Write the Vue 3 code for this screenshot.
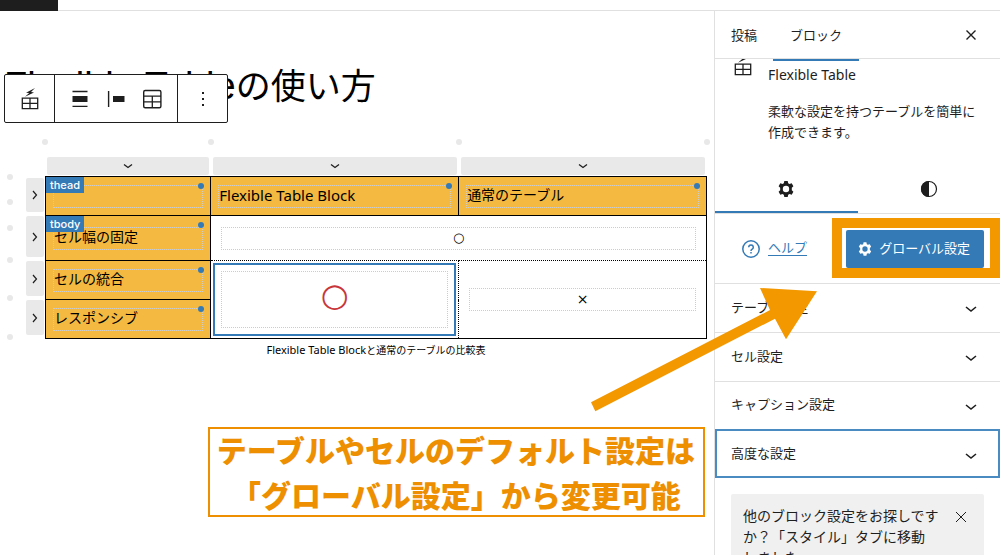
<script setup>
const panels = ['テーブル設定', 'セル設定', 'キャプション設定', '高度な設定']
const columns = [1, 2, 3]
const rows = [1, 2, 3, 4]
</script>

<template>
  <div class="app">
    <header class="topbar"><span class="logo"></span></header>
    <div class="workspace">
      <main class="editor">
        <h1 class="title"><span class="latin">Flexible Table</span>の使い方</h1>

        <div class="toolbar" role="toolbar" aria-label="ブロックツール">
          <div class="group first">
            <button type="button" aria-label="Flexible Table">
              <svg width="24" height="24" viewBox="0 0 24 24">
                <path d="M17 1 8 5.7l3.2.4L7 9.8l9-4.3-3-.5z" fill="#1e1e1e" />
                <path d="M4.3 11.2h15.4v10.4H4.3zM12 11.2v10.4M4.3 16.4h15.4" fill="none" stroke="#1e1e1e" stroke-width="1.3" />
              </svg>
            </button>
          </div>
          <div class="group second">
            <button type="button" aria-label="配置">
              <svg width="24" height="24" viewBox="0 0 24 24">
                <path d="M4.5 4.5h15M4.5 19.3h15" stroke="#1e1e1e" stroke-width="1.3" />
                <path d="M4.5 9h15v6h-15z" fill="#1e1e1e" />
              </svg>
            </button>
            <button type="button" aria-label="セルの配置">
              <svg width="24" height="24" viewBox="0 0 24 24">
                <path d="M4.6 4v16" stroke="#1e1e1e" stroke-width="1.4" />
                <path d="M9 9h11.5v6H9z" fill="#1e1e1e" />
              </svg>
            </button>
            <button type="button" aria-label="表を編集">
              <svg width="24" height="24" viewBox="0 0 24 24">
                <rect x="3.7" y="3.5" width="17.2" height="17.2" rx="1.5" fill="none" stroke="#1e1e1e" stroke-width="1.4" />
                <path d="M4 9.2h17M4 14.8h17M12.3 9.2v11.5" stroke="#1e1e1e" stroke-width="1.3" />
              </svg>
            </button>
          </div>
          <div class="group third">
            <button type="button" aria-label="オプション">
              <svg width="24" height="24" viewBox="0 0 24 24">
                <path d="M11 5h2v2h-2zM11 11h2v2h-2zM11 17h2v2h-2z" fill="#1e1e1e" />
              </svg>
            </button>
          </div>
        </div>

        <div class="block">
          <div class="column-dots"><i v-for="n in 4" :key="n" class="dot"></i></div>
          <div class="column-buttons">
            <button v-for="c in columns" :key="c" type="button" :aria-label="'列 ' + c + ' を選択'">
              <svg width="10" height="6" viewBox="0 0 10 6"><path d="m1 1.5 4 3 4-3" fill="none" stroke="#1e1e1e" stroke-width="1.3" /></svg>
            </button>
          </div>
          <div class="row-dots"><i v-for="n in 6" :key="n" class="dot"></i></div>
          <div class="row-buttons">
            <button v-for="r in rows" :key="r" type="button" :aria-label="'行 ' + r + ' を選択'">
              <svg width="6" height="10" viewBox="0 0 6 10"><path d="m1 1 3.5 4L1 9" fill="none" stroke="#1e1e1e" stroke-width="1.2" /></svg>
            </button>
          </div>
          <table>
            <colgroup><col class="narrow" /><col /><col /></colgroup>
            <thead>
              <tr>
                <th><b class="tag">thead</b><i class="mark"></i><span class="text"></span></th>
                <th><i class="mark"></i><span class="text"><span class="latin">Flexible Table Block</span></span></th>
                <th><i class="mark"></i><span class="text">通常のテーブル</span></th>
              </tr>
            </thead>
            <tbody>
              <tr class="tall">
                <th><b class="tag">tbody</b><i class="mark"></i><span class="text">セル幅の固定</span></th>
                <td colspan="2"><span class="text small">○</span></td>
              </tr>
              <tr>
                <th><i class="mark"></i><span class="text">セルの統合</span></th>
                <td rowspan="2" class="selected"><span class="text large">○</span></td>
                <td rowspan="2"><span class="text cross">×</span></td>
              </tr>
              <tr>
                <th><i class="mark"></i><span class="text">レスポンシブ</span></th>
              </tr>
            </tbody>
          </table>
          <p class="caption"><span class="latin">Flexible Table Block</span>と通常のテーブルの比較表</p>
        </div>

        <div class="callout">
          <p>テーブルやセルのデフォルト設定は<br />「グローバル設定」から変更可能</p>
        </div>
      </main>

      <aside class="sidebar">
        <div class="tabs">
          <button type="button">投稿</button>
          <button type="button" class="active">ブロック</button>
          <button type="button" class="close" aria-label="設定を閉じる">
            <svg width="12" height="12" viewBox="0 0 12 12"><path d="m1.5 1.5 9 9M10.500 1.500l-9 9" stroke="#1e1e1e" stroke-width="1.4" /></svg>
          </button>
        </div>
        <div class="inspector">
          <section class="card">
            <svg width="24" height="24" viewBox="0 0 24 24">
              <path d="M17 1 8 5.7l3.2.4L7 9.8l9-4.3-3-.5z" fill="#1e1e1e" />
              <path d="M4.3 11.2h15.4v10.4H4.3zM12 11.2v10.4M4.3 16.4h15.4" fill="none" stroke="#1e1e1e" stroke-width="1.3" />
            </svg>
            <div>
              <h2>Flexible Table</h2>
              <p>柔軟な設定を持つテーブルを簡単に作成できます。</p>
            </div>
          </section>
          <div class="modes">
            <button type="button" class="current" aria-label="設定">
              <svg width="24" height="24" viewBox="0 0 24 24"><path fill="#1e1e1e" fill-rule="evenodd" d="M10.3 4h3.4l.5 2.2 1.3.8 2.2-.7 1.7 3-1.6 1.5v2.4l1.6 1.5-1.7 3-2.2-.7-1.3.8-.5 2.2h-3.4l-.5-2.2-1.3-.8-2.2.7-1.7-3 1.600-1.500v-2.400L4.600 9.300l1.700-3 2.200.7 1.300-.8zM12 8.800a3.200 3.200 0 1 0 0 6.400 3.200 3.200 0 0 0 0-6.400z" /></svg>
            </button>
            <button type="button" aria-label="スタイル">
              <svg width="24" height="24" viewBox="0 0 24 24">
                <circle cx="12" cy="12" r="7.5" fill="none" stroke="#1e1e1e" stroke-width="1.2" />
                <path d="M12 4a8 8 0 0 0 0 16z" fill="#1e1e1e" />
              </svg>
            </button>
          </div>
          <div class="actions">
            <a href="#help">
              <svg width="20" height="20" viewBox="0 0 20 20" fill="none" stroke="#337ab7">
                <circle cx="10" cy="10" r="8.2" stroke-width="1.5" />
                <path d="M7.700 8.200a2.300 2.300 0 1 1 3.500 2c-.8.500-1.200.8-1.200 1.700M10 13v1.500" stroke-width="1.5" />
              </svg>
              <span>ヘルプ</span>
            </a>
            <div class="highlight">
              <button type="button">
                <svg width="20" height="20" viewBox="0 0 24 24"><path fill="#fff" fill-rule="evenodd" d="M10.3 4h3.4l.5 2.2 1.3.8 2.2-.7 1.7 3-1.6 1.5v2.4l1.6 1.5-1.7 3-2.2-.7-1.3.8-.5 2.2h-3.4l-.5-2.2-1.3-.8-2.2.7-1.7-3 1.600-1.500v-2.400L4.600 9.300l1.700-3 2.200.7 1.300-.8zM12 8.800a3.200 3.200 0 1 0 0 6.400 3.200 3.200 0 0 0 0-6.400z" /></svg>
                <span>グローバル設定</span>
              </button>
            </div>
          </div>
          <div class="panels">
            <button v-for="(p, i) in panels" :key="p" type="button" class="panel" :class="{ focused: i === 3 }">
              <span>{{ p }}</span>
              <svg width="12" height="8" viewBox="0 0 12 8"><path d="m1 2 5 4 5-4" fill="none" stroke="#1e1e1e" stroke-width="1.6" /></svg>
            </button>
          </div>
          <div class="notice">
            <p>他のブロック設定をお探しですか？「スタイル」タブに移動<br />しました。</p>
            <button type="button" aria-label="通知を閉じる">
              <svg width="12" height="12" viewBox="0 0 12 12"><path d="m1 1 10 10M11 1 1 11" stroke="#1e1e1e" stroke-width="1" /></svg>
            </button>
          </div>
        </div>
      </aside>
    </div>

    <svg class="arrow" width="226" height="124" viewBox="0 0 226 124" aria-hidden="true">
      <path d="M169 0 226 3.3 195 51.3 184 30.7 4.3 123.3 0 114.3 179 22z" fill="#f49800" />
    </svg>
  </div>
</template>

<style>
body {
  overflow: hidden;
}
</style>

<style scoped>
.app {
  position: relative;
  display: flex;
  flex-direction: column;
  height: 100vh;
  overflow: hidden;
  background: #fff;
  color: #1e1e1e;
  font-family: "Noto Sans", "Noto Sans CJK JP", sans-serif;
  font-size: 13px;
}
.app * {
  box-sizing: border-box;
}
button {
  display: flex;
  align-items: center;
  justify-content: center;
  margin: 0;
  padding: 0;
  border: 0;
  background: none;
  color: inherit;
  font: inherit;
}
svg {
  display: block;
  flex: none;
}
h1, h2, p {
  margin: 0;
  font-weight: 400;
}
.topbar {
  flex: none;
  height: 11px;
  border-bottom: 1px solid #e0e0e0;
}
.logo {
  display: block;
  width: 58px;
  height: 11px;
  background: #1e1e1e;
}
.workspace {
  display: flex;
  flex: 1;
  min-height: 0;
}
.editor {
  position: relative;
  flex: 1;
  min-width: 0;
  padding-top: 53px;
}
.title {
  height: 46px;
  padding-left: 4px;
  color: #000;
  font-size: 35px;
  line-height: 44px;
  white-space: nowrap;
}
.title .latin {
  font-family: "Liberation Sans", Arial, sans-serif;
  font-size: 38px;
}
.toolbar {
  position: absolute;
  top: 63px;
  left: 4px;
  display: flex;
  height: 49px;
  border: 1px solid #1e1e1e;
  border-radius: 2px;
  background: #fff;
}
.group {
  display: flex;
  align-items: center;
  justify-content: center;
}
.first {
  width: 49px;
}
.second {
  width: 124px;
  gap: 12px;
  border: solid #1e1e1e;
  border-width: 0 1px;
}
.third {
  width: 49px;
}
.block {
  display: grid;
  grid-template-columns: 19px 19px minmax(0, 1fr);
  margin-top: 29px;
  padding: 0 7px;
}
.dot {
  display: block;
  width: 6px;
  height: 6px;
  border-radius: 50%;
  background: #e8e8e8;
}
.column-dots {
  grid-column: 3;
  display: grid;
  grid-template-columns: 2fr 3fr 3fr 6px;
  margin: 0 -3px 12px;
}
.column-buttons {
  grid-column: 3;
  display: grid;
  grid-template-columns: 2fr 3fr 3fr;
  height: 19px;
  padding-bottom: 1px;
}
.column-buttons button {
  margin: 0 2px;
  border-radius: 2px;
  background: #e9e9e9;
}
.row-dots {
  grid-column: 1;
  grid-row: 3;
  display: grid;
  grid-template-rows: 25px 26px 32px 38px 39px 6px;
  margin: -2px 0;
}
.row-buttons {
  grid-column: 2;
  grid-row: 3;
  display: grid;
  grid-template-rows: 38px 45px 39px 39px;
}
.row-buttons button {
  width: 18px;
  margin: 2px 0;
  border-radius: 2px;
  background: #e9e9e9;
}
table {
  grid-column: 3;
  grid-row: 3;
  width: 100%;
  border: 1px solid #000;
  border-collapse: collapse;
  table-layout: fixed;
  color: #000;
  font-size: 14px;
}
.narrow {
  width: 25%;
}
tr {
  height: 39px;
}
.tall {
  height: 45px;
}
th, td {
  position: relative;
  border: 1px solid #000;
  font-weight: 400;
  text-align: left;
}
th {
  padding: 0 7px;
  background: #f4b940;
}
td {
  padding: 0 10px;
  border-style: dotted;
  text-align: center;
}
.text {
  display: block;
  height: 23px;
  border: 1px dotted #ccc;
  line-height: 18px;
  white-space: nowrap;
}
.text .latin {
  font-size: 15px;
}
.small, .large, .cross {
  font-family: "DejaVu Sans", sans-serif;
  line-height: 20px;
}
.small {
  font-size: 13px;
}
.large {
  height: 57px;
  color: #c9363a;
  font-size: 32px;
  line-height: 47px;
}
.selected::after {
  position: absolute;
  inset: 2px;
  border: 2px solid #337ab7;
  content: "";
}
.mark {
  position: absolute;
  top: 6px;
  right: 6px;
  width: 6px;
  height: 6px;
  border-radius: 50%;
  background: #337ab7;
}
.tag {
  position: absolute;
  top: 0;
  left: 0;
  z-index: 1;
  padding: 0 4px;
  background: #337ab7;
  color: #fff;
  font-family: Inter, sans-serif;
  font-size: 11px;
  font-weight: 500;
  line-height: 16px;
}
.caption {
  grid-column: 3;
  height: 21px;
  padding-top: 3px;
  color: #000;
  font-size: 10px;
  line-height: 16px;
  text-align: center;
}
.caption .latin {
  font-size: 11px;
}
.callout {
  display: flex;
  align-items: center;
  width: fit-content;
  height: 90px;
  margin: 67px 9px 0 auto;
  padding: 0 8px 0 7px;
  border: 2px solid #ed8f00;
  color: #ed8f00;
  font-family: "Noto Sans CJK JP", sans-serif;
  font-size: 30px;
  line-height: 45px;
  text-align: center;
  white-space: nowrap;
}
.callout p {
  font-weight: 900;
}
.sidebar {
  display: flex;
  flex: 0 0 286px;
  flex-direction: column;
  border-left: 1px solid #e0e0e0;
}
.tabs {
  display: flex;
  flex: none;
  height: 48px;
  border-bottom: 1px solid #e0e0e0;
}
.tabs button {
  position: relative;
  padding: 0 16px;
}
.tabs .active {
  padding: 0 17px;
}
.tabs .active::after {
  position: absolute;
  top: 48px;
  right: 0;
  left: 0;
  height: 2px;
  background: #337ab7;
  content: "";
}
.tabs .close {
  margin-left: auto;
  padding: 0 23px;
}
.inspector {
  flex: 1;
  min-height: 0;
  overflow: hidden;
}
.card {
  display: flex;
  gap: 13px;
  margin-top: -6px;
  padding: 0 16px;
}
.card h2 {
  padding-top: 12px;
  font-size: 14px;
  line-height: 20px;
}
.card p {
  margin-top: 16px;
  line-height: 21px;
}
.modes {
  display: grid;
  grid-template-columns: 1fr 1fr;
  height: 49px;
  margin-top: 22px;
  border-bottom: 1px solid #e0e0e0;
}
.modes .current {
  box-shadow: inset 0 -2px #337ab7;
}
.actions {
  display: flex;
  align-items: center;
  justify-content: space-between;
  height: 69px;
  padding-left: 26px;
}
.actions a {
  display: flex;
  align-items: center;
  gap: 7px;
  color: #337ab7;
  text-underline-offset: 3px;
}
.actions span {
  padding-bottom: 4px;
}
.highlight {
  align-self: flex-start;
  margin-top: 4px;
  padding: 2px 6px 0 4px;
  border: 10px solid #f49800;
}
.highlight button {
  gap: 4px;
  height: 38px;
  padding: 0 14px 0 9px;
  border-radius: 2px;
  background: #337ab7;
  color: #fff;
}
.panels {
  display: grid;
  grid-auto-rows: 1fr;
  height: 195px;
}
.panel {
  justify-content: space-between;
  padding: 3px 23px 0 16px;
  border-top: 1px solid #e0e0e0;
}
.panel span {
  padding-bottom: 6px;
}
.focused {
  outline: 2px solid #4a8bc2;
  outline-offset: -2px;
}
.notice {
  display: flex;
  align-items: flex-start;
  justify-content: space-between;
  margin: 16px 16px 0;
  padding: 11px 17px 12px 12px;
  border-radius: 2px;
  background: #f0f0f0;
  font-size: 14px;
  line-height: 21px;
}
.notice p {
  width: 200px;
  text-spacing-trim: space-all;
}
.notice button {
  height: 24px;
}
.arrow {
  position: absolute;
  top: 288px;
  right: 183px;
}
</style>
